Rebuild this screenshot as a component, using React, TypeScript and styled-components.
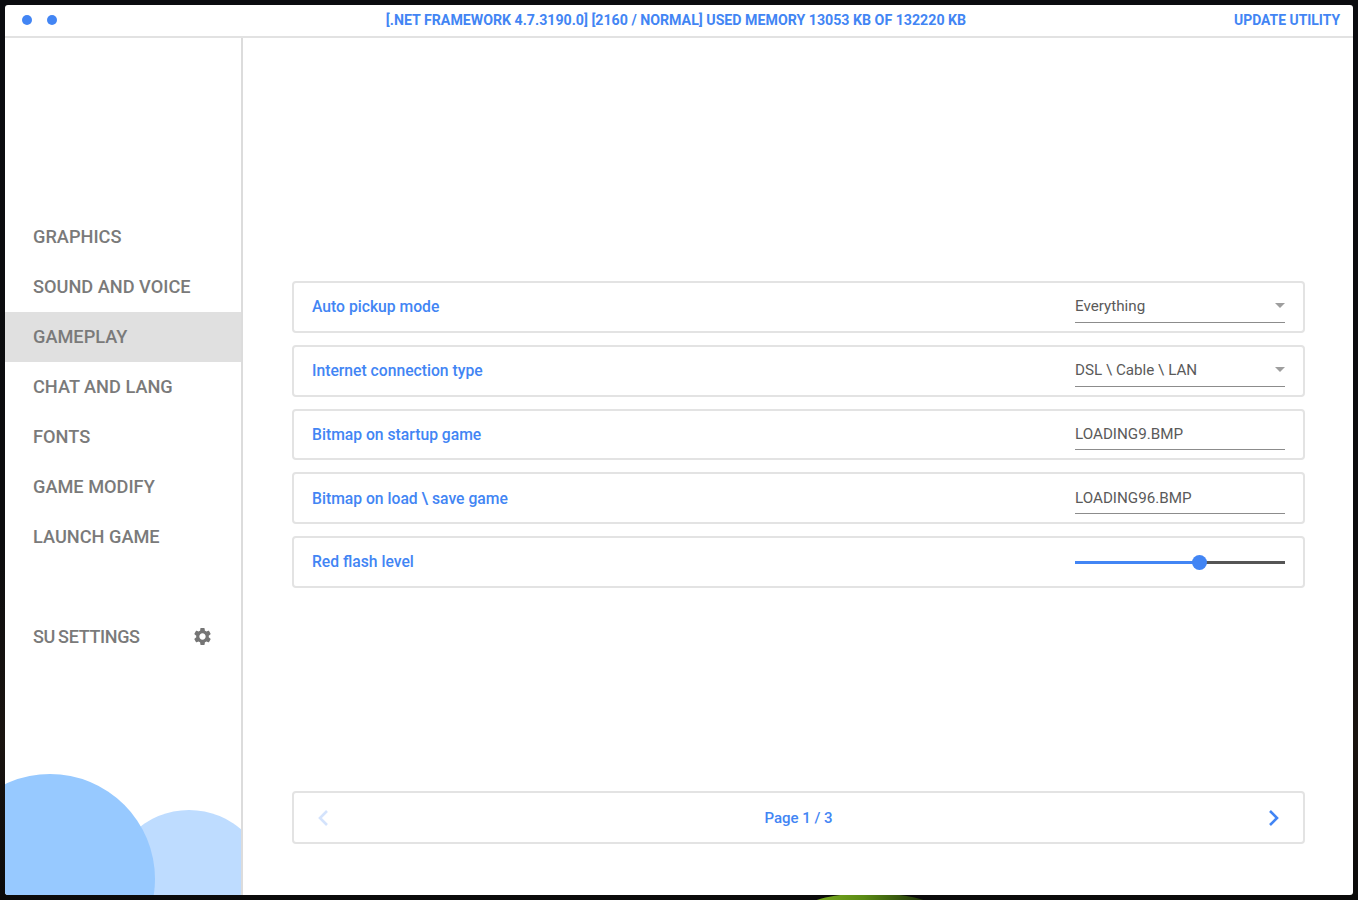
import React from 'react';
import styled, { createGlobalStyle } from 'styled-components';

const GlobalStyle = createGlobalStyle`
  html, body {
    margin: 0;
    padding: 0;
    height: 900px;
    overflow: hidden;
    background: #0c0d10;
  }
  body {
    font-family: Roboto, "Liberation Sans", sans-serif;
  }
`;

const MENU_ITEMS = ['GRAPHICS', 'SOUND AND VOICE', 'GAMEPLAY', 'CHAT AND LANG', 'FONTS', 'GAME MODIFY', 'LAUNCH GAME'];

const App: React.FC = () => (
  <>
    <GlobalStyle />
    <Desktop>
      <Leaf />
      <Window>
        <TitleBar>
          <Dots>
            <Dot />
            <Dot />
          </Dots>
          <TitleText>[.NET FRAMEWORK 4.7.3190.0] [2160 / NORMAL] USED MEMORY 13053 KB OF 132220 KB</TitleText>
          <UpdateLink>UPDATE UTILITY</UpdateLink>
        </TitleBar>
        <Body>
          <Sidebar>
            <Menu>
              {MENU_ITEMS.map((item) => (
                <MenuItem key={item} $active={item === 'GAMEPLAY'}>{item}</MenuItem>
              ))}
            </Menu>
            <SettingsItem>
              <SettingsLabel>SU SETTINGS</SettingsLabel>
              <svg width="21" height="21" viewBox="0 0 24 24" fill="#757575">
                <path d="M19.14 12.94c.04-.3.06-.61.06-.94 0-.32-.02-.64-.07-.94l2.03-1.58a.49.49 0 0 0 .12-.61l-1.92-3.32a.488.488 0 0 0-.59-.22l-2.39.96c-.5-.38-1.03-.7-1.62-.94l-.36-2.54a.484.484 0 0 0-.48-.41h-3.84c-.24 0-.43.17-.47.41l-.36 2.54c-.59.24-1.13.57-1.62.94l-2.39-.96c-.22-.08-.47 0-.59.22L2.74 8.87c-.12.21-.08.47.12.61l2.03 1.58c-.05.3-.09.63-.09.94s.02.64.07.94l-2.03 1.58a.49.49 0 0 0-.12.61l1.92 3.32c.12.22.37.29.59.22l2.39-.96c.5.38 1.03.7 1.62.94l.36 2.54c.05.24.24.41.48.41h3.84c.24 0 .44-.17.47-.41l.36-2.54c.59-.24 1.13-.56 1.62-.94l2.39.96c.22.08.47 0 .59-.22l1.92-3.32c.12-.22.07-.47-.12-.61l-2.01-1.58zM12 15.6c-1.98 0-3.6-1.62-3.6-3.6s1.62-3.6 3.6-3.6 3.6 1.62 3.6 3.6-1.62 3.6-3.6 3.6z" />
              </svg>
            </SettingsItem>
            <BigCircle />
            <SmallCircle />
          </Sidebar>
          <Content>
            <Options>
              <OptionRow>
                <OptionLabel>Auto pickup mode</OptionLabel>
                <SelectField>
                  Everything
                  <Caret />
                </SelectField>
              </OptionRow>
              <OptionRow>
                <OptionLabel>Internet connection type</OptionLabel>
                <SelectField>
                  DSL \ Cable \ LAN
                  <Caret />
                </SelectField>
              </OptionRow>
              <OptionRow>
                <OptionLabel>Bitmap on startup game</OptionLabel>
                <TextField>LOADING9.BMP</TextField>
              </OptionRow>
              <OptionRow>
                <OptionLabel>Bitmap on load \ save game</OptionLabel>
                <TextField>LOADING96.BMP</TextField>
              </OptionRow>
              <OptionRow>
                <OptionLabel>Red flash level</OptionLabel>
                <Slider>
                  <SliderFill style={{ width: '59.2%' }} />
                  <SliderThumb />
                  <SliderRest />
                </Slider>
              </OptionRow>
            </Options>
            <Pager>
              <PagerArrow $disabled>
                <svg width="14" height="18" viewBox="0 0 14 18" fill="none" stroke="currentColor" strokeWidth="2.6">
                  <path d="M11 2L4 9l7 7" />
                </svg>
              </PagerArrow>
              <PagerText>Page 1 / 3</PagerText>
              <PagerArrow>
                <svg width="14" height="18" viewBox="0 0 14 18" fill="none" stroke="currentColor" strokeWidth="2.6">
                  <path d="M3 2l7 7-7 7" />
                </svg>
              </PagerArrow>
            </Pager>
          </Content>
        </Body>
      </Window>
    </Desktop>
  </>
);

const Desktop = styled.div`
  position: relative;
  box-sizing: border-box;
  width: 1358px;
  height: 900px;
  padding: 5px;
  overflow: hidden;
  background: linear-gradient(180deg, #0b0c10 0%, #0c0c0e 60%, #1a1410 82%, #0a0a0a 100%);
`;

const Leaf = styled.div`
  position: absolute;
  left: 807px;
  top: 893px;
  width: 126px;
  height: 30px;
  border-radius: 50%;
  background: linear-gradient(90deg, #7fb021 0%, #5a8a14 45%, #33520d 75%, #1b2a0a 100%);
`;

const Window = styled.div`
  position: relative;
  display: flex;
  flex-direction: column;
  width: 1348px;
  height: 890px;
  background: #fff;
  border-radius: 3px;
  overflow: hidden;
`;

const TitleBar = styled.header`
  position: relative;
  flex: none;
  display: flex;
  align-items: center;
  justify-content: space-between;
  box-sizing: border-box;
  height: 33px;
  padding: 0 13px 2px 17px;
  border-bottom: 2px solid #e2e2e2;
`;

const Dots = styled.div`
  display: flex;
  gap: 15px;
`;

const Dot = styled.span`
  width: 10px;
  height: 10px;
  border-radius: 50%;
  background: #4285f4;
`;

const TitleText = styled.div`
  position: absolute;
  left: 0;
  right: 6px;
  text-align: center;
  font-size: 14.2px;
  font-weight: 700;
  color: #4285f4;
  white-space: nowrap;
`;

const UpdateLink = styled.div`
  font-size: 13.9px;
  font-weight: 700;
  color: #4285f4;
`;

const Body = styled.div`
  flex: 1;
  display: flex;
  min-height: 0;
`;

const Sidebar = styled.nav`
  position: relative;
  flex: none;
  box-sizing: border-box;
  width: 238px;
  padding-top: 174px;
  border-right: 2px solid #dcdcdc;
  overflow: hidden;
`;

const Menu = styled.div`
  display: flex;
  flex-direction: column;
`;

const MenuItem = styled.div<{ $active?: boolean }>`
  display: flex;
  align-items: center;
  box-sizing: border-box;
  height: 50px;
  padding: 0 0 2px 28px;
  font-size: 18.2px;
  font-weight: 500;
  color: #7a7a7a;
  background: ${(p) => (p.$active ? '#e0e0e0' : 'transparent')};
`;

const SettingsItem = styled(MenuItem)`
  justify-content: space-between;
  margin-top: 50px;
  padding-right: 28px;
`;

const SettingsLabel = styled.span`
  font-size: 18px;
  letter-spacing: -0.35px;
  word-spacing: -1px;
`;

const BigCircle = styled.div`
  position: absolute;
  left: -60px;
  top: 736px;
  width: 210px;
  height: 210px;
  border-radius: 50%;
  background: #97c9ff;
  z-index: 1;
`;

const SmallCircle = styled.div`
  position: absolute;
  left: 104px;
  top: 772px;
  width: 160px;
  height: 160px;
  border-radius: 50%;
  background: #bedcff;
`;

const Content = styled.main`
  flex: 1;
  display: flex;
  flex-direction: column;
  justify-content: space-between;
  box-sizing: border-box;
  padding: 243px 48px 51px 49px;
`;

const Options = styled.div`
  display: flex;
  flex-direction: column;
  gap: 12px;
`;

const OptionRow = styled.div`
  display: flex;
  align-items: center;
  justify-content: space-between;
  box-sizing: border-box;
  height: 51.75px;
  padding: 0 18px;
  border: 2px solid #e3e3e3;
  border-radius: 4px;
`;

const OptionLabel = styled.span`
  font-size: 15.7px;
  font-weight: 500;
  color: #4285f4;
`;

const TextField = styled.div`
  position: relative;
  box-sizing: border-box;
  width: 210px;
  height: 32px;
  line-height: 32px;
  font-size: 15.2px;
  color: #5a5a5a;
  border-bottom: 1px solid #8c8c8c;
`;

const SelectField = styled(TextField)`
  line-height: 30px;
`;

const Caret = styled.span`
  position: absolute;
  right: 0;
  top: 12px;
  border-left: 5px solid transparent;
  border-right: 5px solid transparent;
  border-top: 5px solid #9e9e9e;
`;

const Slider = styled.div`
  display: flex;
  align-items: center;
  width: 210px;
  height: 16px;
  margin-top: 1px;
`;

const SliderFill = styled.div`
  height: 3px;
  background: #4285f4;
`;

const SliderThumb = styled.div`
  flex: none;
  width: 15px;
  height: 15px;
  margin: 0 -1px 0 -7px;
  border-radius: 50%;
  background: #4285f4;
  z-index: 1;
`;

const SliderRest = styled.div`
  flex: 1;
  height: 3px;
  background: #555;
`;

const Pager = styled.div`
  display: flex;
  align-items: center;
  justify-content: space-between;
  box-sizing: border-box;
  height: 53px;
  padding: 0 22px;
  border: 2px solid #e3e3e3;
  border-radius: 4px;
`;

const PagerArrow = styled.span<{ $disabled?: boolean }>`
  display: flex;
  color: ${(p) => (p.$disabled ? '#d4e3fc' : '#4285f4')};
`;

const PagerText = styled.span`
  font-size: 15px;
  font-weight: 500;
  color: #4285f4;
`;

export default App;
